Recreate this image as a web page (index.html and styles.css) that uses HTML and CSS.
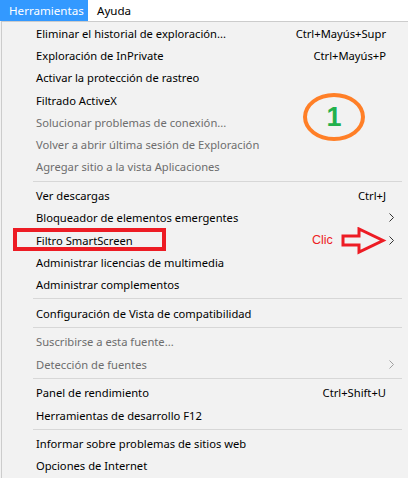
FILE: index.html
```html
<!DOCTYPE html>
<html lang="es">
<head>
<meta charset="utf-8">
<link rel="stylesheet" href="styles.css">
</head>
<body>
<div class="page">
  <div class="menubar">
    <div class="top active">Herramientas</div>
    <div class="top">Ayuda</div>
  </div>
  <div class="menu">
    <div class="item"><span>Eliminar el historial de exploración...</span><span class="key">Ctrl+Mayús+Supr</span></div>
    <div class="item"><span>Exploración de InPrivate</span><span class="key">Ctrl+Mayús+P</span></div>
    <div class="item"><span>Activar la protección de rastreo</span></div>
    <div class="item"><span>Filtrado ActiveX</span></div>
    <div class="item dis"><span>Solucionar problemas de conexión...</span></div>
    <div class="item dis"><span>Volver a abrir última sesión de Exploración</span></div>
    <div class="item dis"><span>Agregar sitio a la vista Aplicaciones</span></div>
    <div class="sep"></div>
    <div class="item"><span>Ver descargas</span><span class="key">Ctrl+J</span></div>
    <div class="item"><span>Bloqueador de elementos emergentes</span><svg class="chev" width="5" height="9" viewBox="0 0 5 9"><path d="M0.5 0.5 L4.5 4.5 L0.5 8.5" fill="none" stroke="#333" stroke-width="1"/></svg></div>
    <div class="item"><span>Filtro SmartScreen</span><svg class="chev" width="5" height="9" viewBox="0 0 5 9"><path d="M0.5 0.5 L4.5 4.5 L0.5 8.5" fill="none" stroke="#333" stroke-width="1"/></svg></div>
    <div class="item"><span>Administrar licencias de multimedia</span></div>
    <div class="item"><span>Administrar complementos</span></div>
    <div class="sep"></div>
    <div class="item"><span>Configuración de Vista de compatibilidad</span></div>
    <div class="sep"></div>
    <div class="item dis"><span>Suscribirse a esta fuente...</span></div>
    <div class="item dis"><span>Detección de fuentes</span><svg class="chev" width="5" height="9" viewBox="0 0 5 9"><path d="M0.5 0.5 L4.5 4.5 L0.5 8.5" fill="none" stroke="#a0a0a0" stroke-width="1"/></svg></div>
    <div class="sep"></div>
    <div class="item"><span>Panel de rendimiento</span><span class="key">Ctrl+Shift+U</span></div>
    <div class="item"><span>Herramientas de desarrollo F12</span></div>
    <div class="sep"></div>
    <div class="item"><span>Informar sobre problemas de sitios web</span></div>
    <div class="item"><span>Opciones de Internet</span></div>
  </div>

  <div class="ann-box"></div>
  <div class="ann-clic">Clic</div>
  <svg class="ann-arrow" width="46" height="28" viewBox="0 0 46 28">
    <polygon points="2,9 18,9 18,2 42,13.5 18,25 18,18 2,18" fill="none" stroke="#ed1c24" stroke-width="3" stroke-linejoin="miter"/>
  </svg>
  <div class="ann-circle">1</div>
</div>
</body>
</html>
```

FILE: styles.css
```css
html, body {
  margin: 0;
  padding: 0;
}
body {
  width: 408px;
  height: 478px;
  overflow: hidden;
  background: #f2f2f2;
  font-family: "Noto Sans", "Open Sans", sans-serif;
  font-size: 11.2px;
  color: #000;
}
.page {
  position: relative;
  width: 408px;
  height: 478px;
}
.menubar {
  display: flex;
  height: 21px;
  background: #ffffff;
}
.top {
  display: flex;
  align-items: center;
  padding: 0 8px 0 9px;
  height: 21px;
  box-sizing: border-box;
  font-size: 11.6px;
}
.top.active {
  background: #3399ff;
  color: #fff;
  width: 88px;
}
.menu {
  border-top: 1px solid #cccccc;
  border-left: 1px solid #cccccc;
  margin-left: 1px;
  height: 456px;
  background: #f2f2f2;
}
.item {
  display: flex;
  align-items: center;
  justify-content: space-between;
  height: 22.3px;
  padding-left: 34px;
  padding-right: 22px;
  white-space: nowrap;
}
.item.dis {
  color: #6d6d6d;
}
.chev {
  margin-right: -8px;
}
.sep {
  height: 1px;
  background: #d7d7d7;
  margin: 2.65px 6px 2.65px 31px;
}
.ann-box {
  position: absolute;
  left: 13px;
  top: 228px;
  width: 153px;
  height: 23px;
  box-sizing: border-box;
  border: 4px solid #ed1c24;
}
.ann-clic {
  position: absolute;
  left: 312px;
  top: 233px;
  color: #ed1c24;
  font-family: "Liberation Sans", sans-serif;
  font-size: 12.5px;
}
.ann-arrow {
  position: absolute;
  left: 341px;
  top: 227px;
}
.ann-circle {
  position: absolute;
  left: 303px;
  top: 93px;
  width: 62px;
  height: 48px;
  box-sizing: border-box;
  border: 4px solid #ff7f27;
  border-radius: 50%;
  display: flex;
  align-items: center;
  justify-content: center;
  color: #22b14c;
  font-family: "Liberation Sans", sans-serif;
  font-weight: bold;
  font-size: 27px;
}
```
